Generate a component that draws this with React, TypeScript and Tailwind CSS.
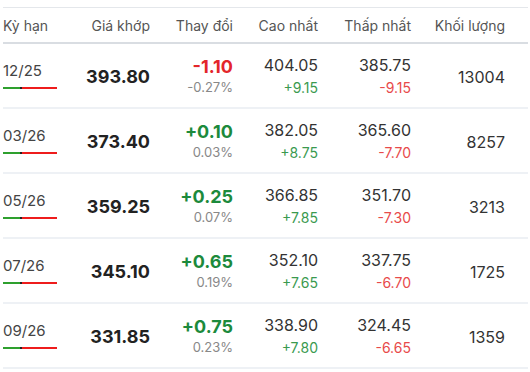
const rows = [
  { term: "12/25", price: "393.80", chg: "-1.10", pct: "-0.27%", high: "404.05", highD: "+9.15", low: "385.75", lowD: "-9.15", vol: "13004" },
  { term: "03/26", price: "373.40", chg: "+0.10", pct: "0.03%", high: "382.05", highD: "+8.75", low: "365.60", lowD: "-7.70", vol: "8257" },
  { term: "05/26", price: "359.25", chg: "+0.25", pct: "0.07%", high: "366.85", highD: "+7.85", low: "351.70", lowD: "-7.30", vol: "3213" },
  { term: "07/26", price: "345.10", chg: "+0.65", pct: "0.19%", high: "352.10", highD: "+7.65", low: "337.75", lowD: "-6.70", vol: "1725" },
  { term: "09/26", price: "331.85", chg: "+0.75", pct: "0.23%", high: "338.90", highD: "+7.80", low: "324.45", lowD: "-6.65", vol: "1359" },
];

const cols = "grid grid-cols-[60px_87px_83px_85px_93px_94px] pr-[23px]";

export default function App() {
  return (
    <div className="w-[530px] h-[372px] bg-white pt-[7px] pl-[3px] pr-[2px] font-['Inter',sans-serif] text-[#333]">
      <div className="border-t border-[#e4e7eb]">
        <div className={`${cols} h-[36px] items-center border-b-2 border-[#d9dde2] text-[14px] text-[#555]`}>
          <div>Kỳ hạn</div>
          <div className="text-right">Giá khớp</div>
          <div className="text-right">Thay đổi</div>
          <div className="text-right">Cao nhất</div>
          <div className="text-right">Thấp nhất</div>
          <div className="text-right">Khối lượng</div>
        </div>
        {rows.map((r) => {
          const down = r.chg.startsWith("-");
          return (
            <div key={r.term} className={`${cols} h-[65px] items-center border-b-2 border-[#eef1f5]`}>
              <div className="flex flex-col">
                <span className="text-[15px] leading-[18px] text-[#444]">{r.term}</span>
                <div className="mt-[7px] flex h-[2px] w-[54px]">
                  <div className="w-[17px] bg-[#2ea02e]" />
                  <div className="w-[2px] bg-[#222]" />
                  <div className="flex-1 bg-[#ee1c1c]" />
                </div>
              </div>
              <div className="text-right text-[18px] font-bold text-[#222] pt-[2px]">{r.price}</div>
              <div className="flex flex-col items-end">
                <span className={`text-[18px] leading-[22px] font-bold ${down ? "text-[#e3262b]" : "text-[#1c8a3c]"}`}>{r.chg}</span>
                <span className="text-[13px] leading-[18px] text-[#888]">{r.pct}</span>
              </div>
              <div className="flex flex-col items-end">
                <span className="text-[16px] leading-[22px] text-[#333]">{r.high}</span>
                <span className="text-[14px] leading-[20px] mt-[2px] text-[#3a9a4f]">{r.highD}</span>
              </div>
              <div className="flex flex-col items-end">
                <span className="text-[16px] leading-[22px] text-[#333]">{r.low}</span>
                <span className="text-[14px] leading-[20px] mt-[2px] text-[#e84a4a]">{r.lowD}</span>
              </div>
              <div className="text-right text-[16px] text-[#333] pt-[3px]">{r.vol}</div>
            </div>
          );
        })}
      </div>
    </div>
  );
}
